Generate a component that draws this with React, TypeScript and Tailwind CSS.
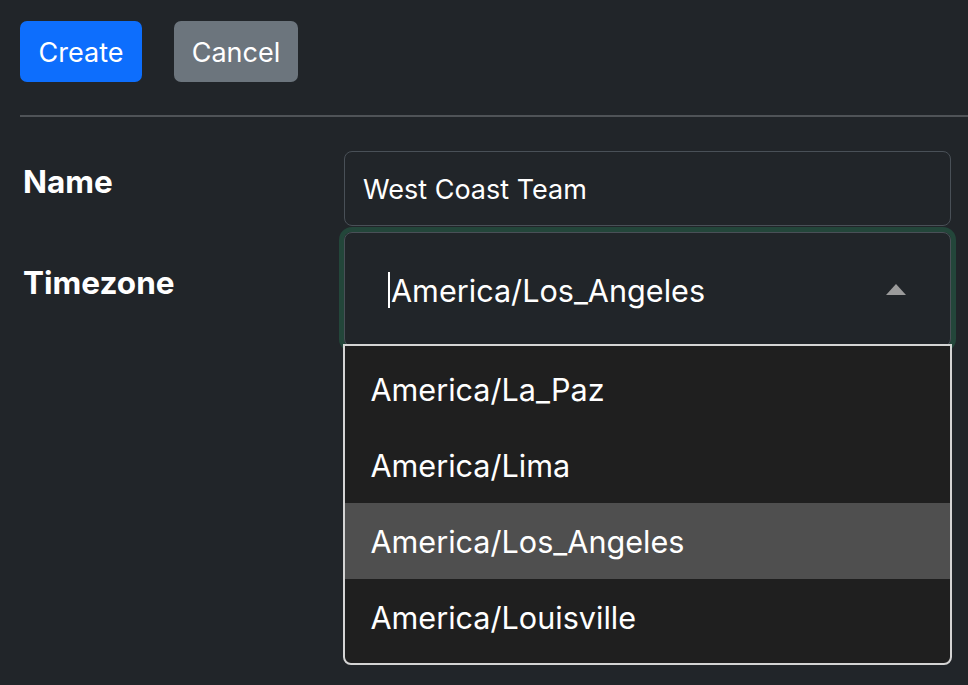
import React from "react";

export default function App() {
  const items = ["America/La_Paz", "America/Lima", "America/Los_Angeles", "America/Louisville"];
  return (
    <div
      className="min-h-screen w-full bg-[#212529] text-white pl-5 pt-[21px] overflow-hidden"
      style={{ fontFamily: "Inter, 'Noto Sans', sans-serif", height: 685 }}
    >
      <div className="flex gap-8">
        <button className="h-[61px] w-[122px] rounded-[7px] bg-[#0d6efd] pt-[3px] text-[27px] text-white">Create</button>
        <button className="h-[61px] w-[124px] rounded-[7px] bg-[#6c757d] pt-[3px] text-[27px] text-white">Cancel</button>
      </div>
      <div className="mt-[33px] h-[2px] bg-[#4f5357]" />
      <div className="mt-[34px] pr-[17px]">
        <div className="flex">
          <div className="w-[324px] pl-[3px] pt-[13px] text-[31.5px] font-bold leading-[36px]">Name</div>
          <div className="flex h-[75px] w-[607px] items-center rounded-[8px] border-[1.6px] border-[#495057] pl-[18px] pt-[3px] text-[27px]">
            West Coast Team
          </div>
        </div>
        <div className="mt-[6px] flex">
          <div className="w-[324px] pl-[3px] pt-[33px] text-[31.5px] font-bold leading-[36px]">Timezone</div>
          <div className="relative h-[115px] w-[607px] rounded-[8px] border-[1.6px] border-[#495057] shadow-[0_0_0_5px_#23463a]">
            <div className="flex h-full items-center pl-[43px] pr-[44px]">
              <span className="mr-[1px] h-[36px] w-[2px] bg-white" />
              <span className="pt-[2px] text-[30.6px]">America/Los_Angeles</span>
              <span className="ml-auto">
                <svg width="20" height="11" viewBox="0 0 20 11">
                  <polygon points="10,0 20,11 0,11" fill="#9b9b9b" />
                </svg>
              </span>
            </div>
            <div className="absolute left-[-1.6px] right-[-1.6px] top-[111px] z-10 h-[321px] rounded-b-[8px] border-2 border-[#d4d4d4] bg-[#1f1f1f] pt-[5px]">
              {items.map((t) => (
                <div
                  key={t}
                  className={
                    "flex h-[76px] items-center pl-[25px] pt-[2px] text-[30.6px] " +
                    (t === "America/Los_Angeles" ? "bg-[#4f4f4f]" : "")
                  }
                >
                  {t}
                </div>
              ))}
            </div>
          </div>
        </div>
      </div>
    </div>
  );
}
